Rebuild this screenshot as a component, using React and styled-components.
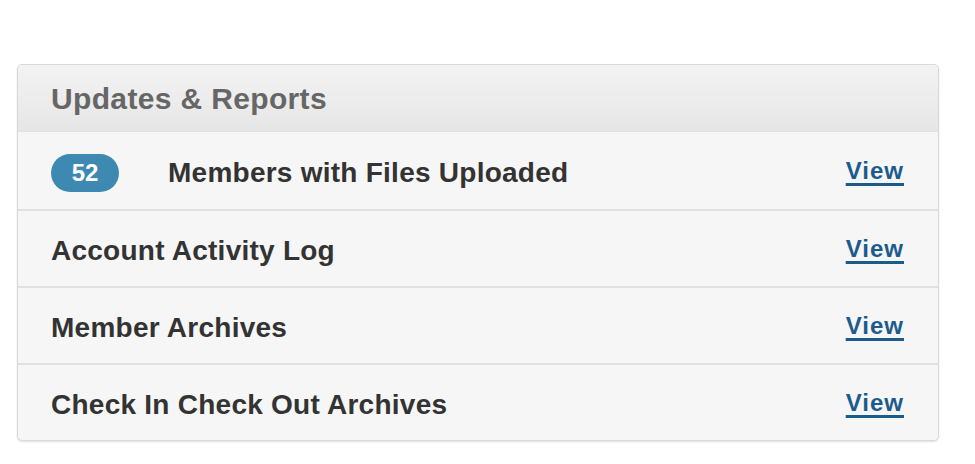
import React from 'react';
import styled, { createGlobalStyle } from 'styled-components';

const GlobalStyle = createGlobalStyle`
  html, body {
    margin: 0;
    background: #fff;
    font-family: 'Liberation Sans', Arial, Helvetica, sans-serif;
  }
`;

const Page = styled.div`
  padding: 64px 36px 24px 17px;
`;

const Panel = styled.section`
  border: 1px solid #d9d9d9;
  border-radius: 5px;
  background: #f6f6f6;
  box-shadow: 0 1px 2px rgba(0, 0, 0, 0.12);
  overflow: hidden;
`;

const Header = styled.header`
  box-sizing: border-box;
  height: 67px;
  display: flex;
  align-items: center;
  padding: 2px 33px 0;
  background: linear-gradient(to bottom, #f3f3f3 0%, #e6e6e6 100%);
  border-bottom: 1px solid #e2e2e2;
`;

const Title = styled.h2`
  margin: 0;
  font-size: 30px;
  font-weight: bold;
  color: #666;
  letter-spacing: 0.35px;
`;

const Row = styled.div`
  box-sizing: border-box;
  height: 77px;
  display: flex;
  align-items: center;
  padding: 4px 35px 0 33px;
  border-top: ${({ first }) => (first ? 'none' : '2px solid #e0e0e0')};
`;

const Badge = styled.span`
  display: inline-flex;
  align-items: center;
  justify-content: center;
  width: 68px;
  height: 38px;
  border-radius: 19px;
  background: #3d89b1;
  color: #fff;
  font-size: 24px;
  font-weight: bold;
  margin-right: 49px;
`;

const Label = styled.span`
  flex: 1;
  font-size: 28px;
  font-weight: bold;
  color: #333;
  letter-spacing: 0.25px;
`;

const ViewLink = styled.a`
  font-size: 24px;
  font-weight: bold;
  letter-spacing: 1px;
  color: #1b5c8c;
  text-decoration: underline;
  text-decoration-thickness: 3px;
  text-underline-offset: 4px;
  margin-top: -4px;
  margin-right: -1px;
`;

const rows = [
  { label: 'Members with Files Uploaded', count: 52 },
  { label: 'Account Activity Log' },
  { label: 'Member Archives' },
  { label: 'Check In Check Out Archives' },
];

export default function App() {
  return (
    <>
      <GlobalStyle />
      <Page>
        <Panel>
          <Header>
            <Title>Updates &amp; Reports</Title>
          </Header>
          {rows.map((r, i) => (
            <Row key={r.label} first={i === 0}>
              {r.count != null && <Badge>{r.count}</Badge>}
              <Label>{r.label}</Label>
              <ViewLink href="#">View</ViewLink>
            </Row>
          ))}
        </Panel>
      </Page>
    </>
  );
}
